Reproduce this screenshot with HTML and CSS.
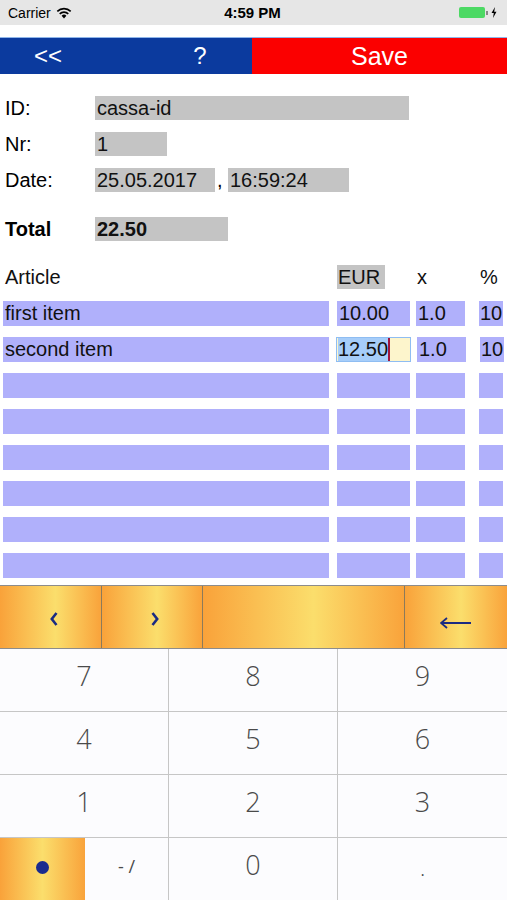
FILE: index.html
```html
<!DOCTYPE html>
<html lang="en">
<head>
  <meta charset="UTF-8" />
  <title>Cassa</title>
  <link rel="stylesheet" href="styles.css">
</head>
<body>
  <div class="status">
    <div class="status-left">Carrier
      <svg class="wifi" width="16" height="12" viewBox="0 0 16 12">
        <path d="M8 11.5 L5.6 8.8 A3.4 3.4 0 0 1 10.4 8.8 Z" fill="#000"/>
        <path d="M3.7 6.9 A6.1 6.1 0 0 1 12.3 6.9" stroke="#000" stroke-width="1.6" fill="none"/>
        <path d="M1.3 4.4 A9.5 9.5 0 0 1 14.7 4.4" stroke="#000" stroke-width="1.6" fill="none"/>
      </svg>
    </div>
    <div class="status-time">4:59 PM</div>
    <div class="status-right">
      <span class="battery"></span><span class="battery-tip"></span>
      <svg width="6" height="11" viewBox="0 0 6 11"><path d="M4 0 L0.5 6 H2.8 L2 11 L5.5 4.8 H3.2 Z" fill="#000"/></svg>
    </div>
  </div>

  <nav class="navbar">
    <button class="nav-btn">&lt;&lt;</button>
    <span class="nav-blank"></span>
    <button class="nav-btn">?</button>
    <button class="nav-btn save">Save</button>
  </nav>

  <div class="head-form">
    <div class="form-row">
      <span class="label">ID:</span>
      <span class="field field-id">cassa-id</span>
    </div>
    <div class="form-row">
      <span class="label">Nr:</span>
      <span class="field field-nr">1</span>
    </div>
    <div class="form-row">
      <span class="label">Date:</span>
      <span class="field field-date">25.05.2017</span>
      <span class="comma">,</span>
      <span class="field field-time">16:59:24</span>
    </div>
    <div class="form-row total-row">
      <span class="label">Total</span>
      <span class="field field-total">22.50</span>
    </div>
  </div>

  <div class="articles">
    <div class="art-row art-head">
      <span class="cell c-name">Article</span>
      <span class="cell c-eur"><span class="eur-tag">EUR</span></span>
      <span class="cell c-qty">x</span>
      <span class="cell c-pct">%</span>
    </div>
    <div class="art-row">
      <span class="cell c-name in">first item</span>
      <span class="cell c-eur in">10.00</span>
      <span class="cell c-qty in">1.0</span>
      <span class="cell c-pct in">10</span>
    </div>
    <div class="art-row">
      <span class="cell c-name in">second item</span>
      <span class="cell c-eur in focus"><span class="selected">12.50</span><span class="caret"></span></span>
      <span class="cell c-qty in">1.0</span>
      <span class="cell c-pct in">10</span>
    </div>
    <div class="art-row"><span class="cell c-name in"></span><span class="cell c-eur in"></span><span class="cell c-qty in"></span><span class="cell c-pct in"></span></div>
    <div class="art-row"><span class="cell c-name in"></span><span class="cell c-eur in"></span><span class="cell c-qty in"></span><span class="cell c-pct in"></span></div>
    <div class="art-row"><span class="cell c-name in"></span><span class="cell c-eur in"></span><span class="cell c-qty in"></span><span class="cell c-pct in"></span></div>
    <div class="art-row"><span class="cell c-name in"></span><span class="cell c-eur in"></span><span class="cell c-qty in"></span><span class="cell c-pct in"></span></div>
    <div class="art-row"><span class="cell c-name in"></span><span class="cell c-eur in"></span><span class="cell c-qty in"></span><span class="cell c-pct in"></span></div>
    <div class="art-row"><span class="cell c-name in"></span><span class="cell c-eur in"></span><span class="cell c-qty in"></span><span class="cell c-pct in"></span></div>
  </div>

  <!-- custom number pad -->
  <div class="keyboard">
    <div class="toolbar">
      <button class="tool">
        <svg width="8" height="14" viewBox="0 0 8 14"><path d="M6.5 1 L1.8 7 L6.5 13" stroke="#1b2b82" stroke-width="2.6" fill="none"/></svg>
      </button>
      <button class="tool">
        <svg width="8" height="14" viewBox="0 0 8 14"><path d="M1.5 1 L6.2 7 L1.5 13" stroke="#1b2b82" stroke-width="2.6" fill="none"/></svg>
      </button>
      <button class="tool"></button>
      <button class="tool arrow">
        <svg width="32" height="12" viewBox="0 0 32 12"><path d="M1 6 H31 M7 1 L1 6 L7 11" stroke="#1b2b82" stroke-width="1.8" fill="none"/></svg>
      </button>
    </div>
    <div class="keys">
      <button class="key">7</button>
      <button class="key">8</button>
      <button class="key">9</button>
      <button class="key">4</button>
      <button class="key">5</button>
      <button class="key">6</button>
      <button class="key">1</button>
      <button class="key">2</button>
      <button class="key">3</button>
      <div class="key split">
        <button class="dot-key"><span class="dot"></span></button>
        <button class="sign-key">- /</button>
      </div>
      <button class="key">0</button>
      <button class="key period">.</button>
    </div>
  </div>
</body>
</html>
```

FILE: styles.css
```css
body {
  margin: 0;
  width: 507px;
  height: 900px;
  overflow: hidden;
  font-family: 'Liberation Sans', Arial, sans-serif;
  background: #fff;
  color: #000;
}

button {
  font-family: inherit;
  border: none;
  padding: 0;
  margin: 0;
  background: none;
  cursor: pointer;
}

/* status bar */
.status {
  height: 25px;
  background: #e6e6e6;
  display: flex;
  align-items: center;
  padding: 0 8px;
  font-size: 14px;
  margin-bottom: 12px;
}

.status-left {
  flex: 1;
  display: flex;
  align-items: center;
  gap: 5px;
}

.status-time {
  font-weight: bold;
  font-size: 15px;
}

.status-right {
  flex: 1;
  display: flex;
  justify-content: flex-end;
  align-items: center;
  padding-right: 2px;
}

.battery {
  width: 26px;
  height: 11px;
  border-radius: 2px;
  background: #4cd964;
  display: inline-block;
}

.battery-tip {
  width: 2px;
  height: 4px;
  background: #888;
  margin: 0 3px 0 1px;
}

/* navigation */
.navbar {
  display: grid;
  grid-template-columns: 96px 52px 104px 1fr;
  height: 36px;
  background: #0b3a9e;
  border-top: 1px solid #8fb6ea;
}

.nav-btn {
  color: #fff;
  font-size: 24px;
  height: 36px;
}

.nav-btn.save {
  background: #fb0000;
  font-size: 25px;
}

/* header fields */
.head-form {
  padding: 22px 0 0 5px;
}

.form-row {
  display: flex;
  align-items: center;
  height: 24px;
  margin-bottom: 12px;
  font-size: 20px;
}

.label {
  width: 90px;
}

.field {
  background: #c4c4c4;
  height: 24px;
  line-height: 25px;
  padding-left: 2px;
  box-sizing: border-box;
  color: #111;
}

.field-id { width: 314px; }
.field-nr { width: 72px; }
.field-date { width: 120px; }
.field-time { width: 121px; }

.comma {
  width: 13px;
  padding-left: 2px;
  box-sizing: border-box;
  line-height: 30px;
}

.total-row {
  margin-top: 25px;
  font-weight: bold;
}

.field-total { width: 133px; }

/* articles */
.articles {
  padding-top: 12px;
}

.art-row {
  display: flex;
  height: 25px;
  margin-bottom: 11px;
  padding-left: 3px;
  font-size: 20px;
}

.art-head {
  height: 24px;
  margin-bottom: 12px;
}

.cell {
  display: block;
  height: 100%;
  line-height: 25px;
  overflow: hidden;
  white-space: nowrap;
  box-sizing: border-box;
  padding-left: 2px;
  color: #111;
}

.c-name { width: 326px; }
.c-eur { width: 73px; margin-left: 8px; }
.c-qty { width: 49px; margin-left: 6px; }
.c-pct { width: 24px; margin-left: 14px; padding-left: 1px; }

.in { background: #b0b0fb; }

.art-head .cell { line-height: 24px; }
.art-head .c-eur { padding-left: 0; }
.art-head .c-qty { padding-left: 1px; }

.eur-tag {
  display: inline-block;
  background: #c4c4c4;
  padding: 0 0 0 1px;
  width: 48px;
  box-sizing: border-box;
}

.focus {
  margin-left: 7px;
  width: 75px;
  background: #fdf5cc;
  border: 1px solid #8fbdf2;
  padding-left: 1px;
  display: flex;
  align-items: stretch;
  line-height: 23px;
}

.selected {
  background: #a6cdf9;
  display: block;
}

.caret {
  width: 2px;
  background: #a0153e;
  display: block;
}

/* keyboard */
.keyboard {
  margin-top: -4px;
}

.toolbar {
  display: grid;
  grid-template-columns: 102px 101px 202px 1fr;
  height: 64px;
  border-top: 1px solid #8c8c8c;
  border-bottom: 1px solid #8c8c8c;
  box-sizing: border-box;
}

.tool {
  background: linear-gradient(to right, #f9a23a, #fbde6c 55%, #f9a33b);
  border-right: 1px solid #8c7a5a;
  display: flex;
  justify-content: center;
  align-items: center;
  padding: 4px 0 0 6px;
}

.tool:last-child { border-right: none; }

.tool.arrow {
  padding: 12px 0 0 0;
}

.keys {
  display: grid;
  grid-template-columns: 169px 169px 1fr;
  grid-auto-rows: 63px;
}

.key {
  background: #fcfcfe;
  border-right: 1px solid #c6c6c6;
  border-bottom: 1px solid #c6c6c6;
  font-family: 'Open Sans', sans-serif;
  font-weight: 300;
  font-size: 27px;
  color: #4a4a4a;
  padding-bottom: 10px;
}

.key:nth-child(3n) { border-right: none; }

.key.period {
  font-size: 22px;
  padding-top: 0;
  padding-bottom: 4px;
}

.split {
  display: flex;
  padding: 0;
}

.dot-key {
  width: 85px;
  background: linear-gradient(to right, #f9a23a, #fbde6c 50%, #f9a33b);
  display: flex;
  justify-content: center;
  align-items: center;
  padding-bottom: 4px;
}

.dot {
  width: 13px;
  height: 13px;
  border-radius: 50%;
  background: #1a2b8e;
}

.sign-key {
  flex: 1;
  font-family: 'Open Sans', sans-serif;
  font-size: 18px;
  color: #4a4a4a;
  padding-bottom: 6px;
}
```
